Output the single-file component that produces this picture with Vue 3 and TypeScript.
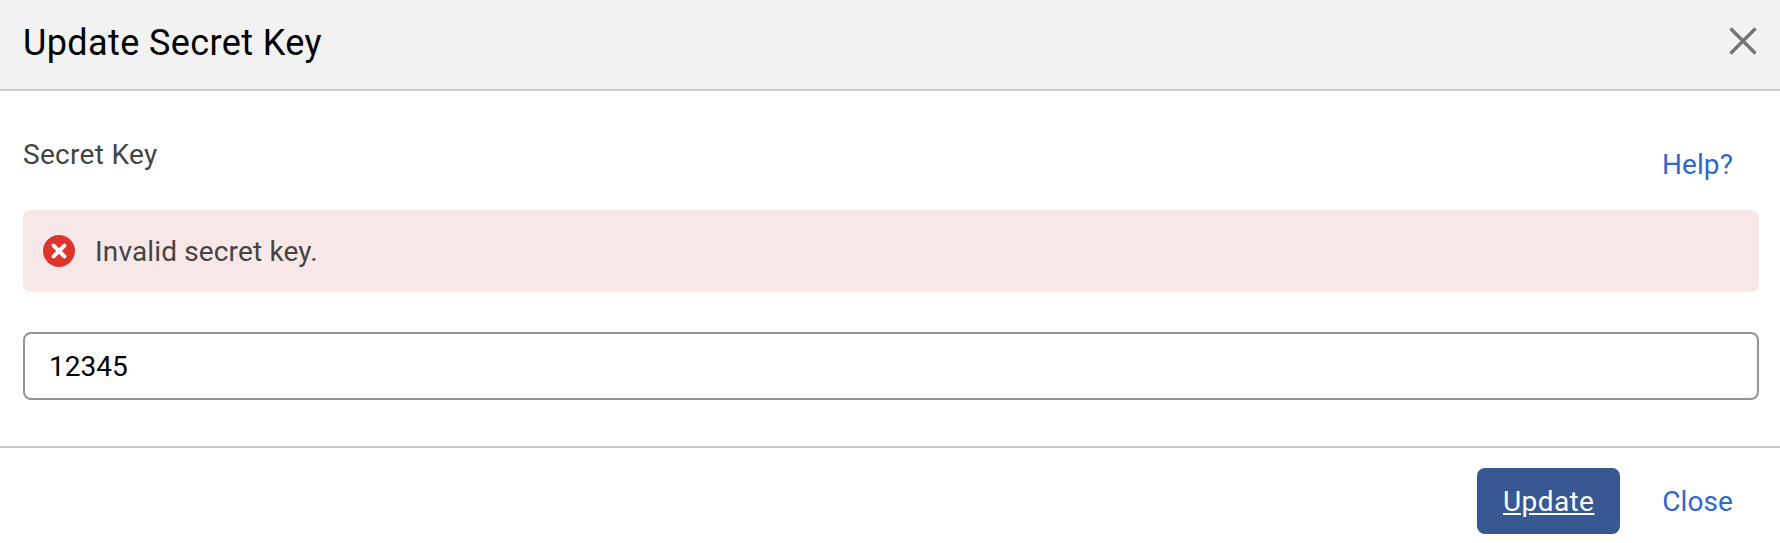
<script setup lang="ts">
const title: string = 'Update Secret Key'
</script>

<template>
  <div class="dialog">
    <header class="head">
      <h1 class="title">{{ title }}</h1>
      <button class="x" aria-label="Close">
        <svg width="28" height="28" viewBox="0 0 28 28"><path d="M1.5 1.5 L26.5 26.5 M26.5 1.5 L1.5 26.5" stroke="#757575" stroke-width="3.4" fill="none" /></svg>
      </button>
    </header>
    <main class="body">
      <div class="label-row">
        <span class="label">Secret Key</span>
        <a class="link help">Help?</a>
      </div>
      <div class="alert">
        <svg class="alert-icon" width="32" height="32" viewBox="0 0 32 32">
          <circle cx="16" cy="16" r="16" fill="#dc352d" />
          <path d="M10.6 10.6 L21.4 21.4 M21.4 10.6 L10.6 21.4" stroke="#fff" stroke-width="4" stroke-linecap="round" fill="none" />
        </svg>
        <span class="alert-text">Invalid secret key.</span>
      </div>
      <input class="input" type="text" value="12345" />
    </main>
    <footer class="foot">
      <button class="primary"><u>Update</u></button>
      <a class="link close">Close</a>
    </footer>
  </div>
</template>

<style scoped>
.dialog { width: 1780px; height: 543px; background: #fff; font-family: Roboto, "Liberation Sans", sans-serif; display: flex; flex-direction: column; box-sizing: border-box; }
.head { height: 91px; box-sizing: border-box; background: #f2f2f2; border-bottom: 2px solid #cacaca; display: flex; align-items: center; justify-content: space-between; padding: 0 23px 0 23px; }
.title { margin: -4px 0 0; font-size: 36px; font-weight: 400; color: #000; letter-spacing: 0.4px; }
.x { border: 0; background: none; padding: 0; display: flex; margin-top: -7px; }
.body { padding: 0 21px 0 23px; display: flex; flex-direction: column; border-bottom: 2px solid #cacaca; box-sizing: border-box; height: 357px; flex: none; }
.label-row { height: 119px; display: flex; justify-content: space-between; align-items: flex-start; }
.label { font-size: 28px; color: #444; line-height: 32px; margin-top: 48px; letter-spacing: 0.3px; }
.link { color: #2e68cc; font-size: 28px; line-height: 32px; letter-spacing: 0.1px; }
.help { margin-top: 58px; margin-right: 26px; }
.alert { height: 82px; background: #f8e7e7; border-radius: 8px; display: flex; align-items: center; padding-left: 20px; box-sizing: border-box; }
.alert-icon { flex: none; }
.alert-text { margin-left: 20px; font-size: 28px; color: #444; letter-spacing: 0.15px; }
.input { margin-top: 40px; height: 68px; box-sizing: border-box; border: 2px solid #949494; border-radius: 8px; padding: 0 24px; font: 400 28px Roboto, sans-serif; color: #000; background: #fff; outline: none; width: 100%; }
.foot { flex: 1; display: flex; align-items: center; justify-content: flex-end; padding-right: 47px; padding-top: 10px; box-sizing: border-box; }
.primary { width: 143px; height: 66px; background: #375890; color: #fff; border: 0; border-radius: 8px; font: 400 28px Roboto, sans-serif; letter-spacing: 0.4px; padding: 2px 0 0; }
.close { margin-left: 42px; padding-top: 2px; }
</style>

<style>
html, body { margin: 0; background: #fff; }
</style>
